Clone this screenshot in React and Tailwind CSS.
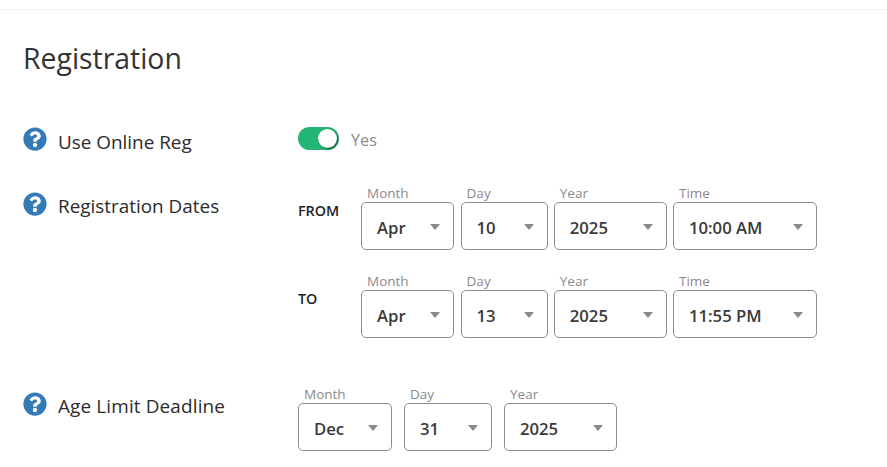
import React from 'react';
import { FaQuestionCircle } from 'react-icons/fa';

function HelpLabel({ text, className, textClass }) {
  return (
    <div className={`flex items-start w-[275px] shrink-0 ${className}`}>
      <FaQuestionCircle className="w-[24px] h-[24px] text-[#337ab7] shrink-0" />
      <span className={`ml-[11px] text-[18.9px] leading-[28px] text-[#2b2b2b] ${textClass}`}>{text}</span>
    </div>
  );
}

function SelectBox({ label, value, width }) {
  return (
    <div className="flex flex-col" style={{ width }}>
      <span className="pl-[6px] h-[18px] text-[13.5px] leading-[18px] text-[#8a8a8a]">{label}</span>
      <div className="flex items-center justify-between h-[48px] pl-[15px] pr-[13px] border border-[#8c8c8c] rounded-[5px] bg-white">
        <span className="pt-[3px] text-[16.7px] font-semibold text-[#3a3a3a]">{value}</span>
        <span className="mt-[1px] w-0 h-0 border-l-[5.5px] border-r-[5.5px] border-t-[6px] border-l-transparent border-r-transparent border-t-[#8a8a8a]"></span>
      </div>
    </div>
  );
}

function DateRow({ tag, month, day, time }) {
  return (
    <div className="flex items-start">
      <span className="w-[63px] pt-[17px] text-[14.3px] leading-[20px] font-semibold text-[#222]">{tag}</span>
      <div className="flex gap-[6.2px]">
        <SelectBox label="Month" value={month} width={93.4} />
        <SelectBox label="Day" value={day} width={87} />
        <SelectBox label="Year" value="2025" width={113} />
        <SelectBox label="Time" value={time} width={144} />
      </div>
    </div>
  );
}

export default function App() {
  return (
    <div className="w-[887px] h-[467px] overflow-hidden bg-white pt-[9px] font-['Open_Sans',sans-serif]">
      <div className="border-t border-[#f2f2f2] pl-[23px]">
        <h1 className="pt-[27px] text-[28.4px] leading-[42px] font-normal text-[#333]">Registration</h1>

        <div className="flex items-start mt-[48px]">
          <HelpLabel text="Use Online Reg" textClass="pt-[1px]" />
          <div className="flex items-center h-[24px]">
            <div className="relative -mt-[2px] w-[41px] h-[23px] rounded-full bg-[#22b573]">
              <span className="absolute right-[2px] top-[2px] w-[19px] h-[19px] rounded-full bg-white shadow-[1px_1px_2px_rgba(0,0,0,0.6)]"></span>
            </div>
            <span className="ml-[12px] pt-[2px] text-[16.2px] text-[#8a8a8a]">Yes</span>
          </div>
        </div>

        <div className="flex items-start mt-[41px]">
          <HelpLabel text="Registration Dates" className="mt-[-5px]" />
          <div className="flex flex-col gap-[22px] mt-[-13px]">
            <DateRow tag="FROM" month="Apr" day="10" time="10:00 AM" />
            <DateRow tag="TO" month="Apr" day="13" time="11:55 PM" />
          </div>
        </div>

        <div className="flex items-start mt-[47px]">
          <HelpLabel text="Age Limit Deadline" className="mt-[7px]" textClass="tracking-[0.15px]" />
          <div className="flex gap-[12px]">
            <SelectBox label="Month" value="Dec" width={94} />
            <SelectBox label="Day" value="31" width={88} />
            <SelectBox label="Year" value="2025" width={113} />
          </div>
        </div>
      </div>
    </div>
  );
}
